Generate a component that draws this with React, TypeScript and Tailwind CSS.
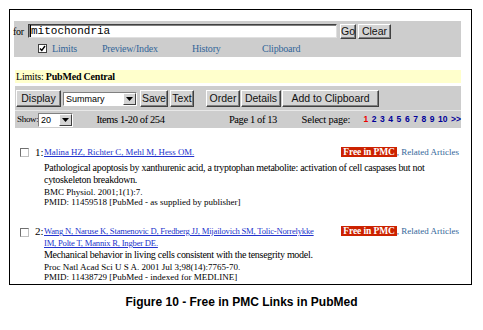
import React from "react";

const serif = { fontFamily: '"Liberation Serif", "Times New Roman", serif' };
const sans = { fontFamily: '"Liberation Sans", Arial, sans-serif' };
const mono = { fontFamily: '"Liberation Mono", "Courier New", monospace' };

function Btn({ w, children, h = "h-[17px]" }: { w: string; children: React.ReactNode; h?: string }) {
  return (
    <div
      className={`${w} ${h} flex items-center justify-center bg-[#d4d4d4] border-t border-l border-t-white border-l-white border-r border-b border-r-[#404040] border-b-[#404040] shadow-[inset_-1px_-1px_0_#808080] text-[10.5px] text-[#111] leading-none whitespace-nowrap`}
      style={sans}
    >
      {children}
    </div>
  );
}

function Select({ w, value }: { w: string; value: string }) {
  return (
    <div className={`${w} h-[14px] flex items-stretch bg-white border border-t-[#808080] border-l-[#808080] border-r-white border-b-white`}>
      <div className="flex-1 text-[9px] leading-[12px] pl-[2px] text-black" style={sans}>{value}</div>
      <div className="w-[13px] bg-[#d4d4d4] border-t border-l border-t-white border-l-white border-r border-b border-r-[#404040] border-b-[#404040] flex items-center justify-center">
        <svg width="7" height="4" viewBox="0 0 7 4"><path d="M0 0h7L3.5 4z" fill="#000" /></svg>
      </div>
    </div>
  );
}

function Check({ cls = "" }: { cls?: string }) {
  return <div className={`w-[9px] h-[9px] shrink-0 bg-white border border-t-[#707070] border-l-[#707070] border-r-[#c0c0c0] border-b-[#c0c0c0] ${cls}`} />;
}

function Badge() {
  return (
    <span className="flex items-center whitespace-nowrap text-[9px] leading-[10px]" style={serif}>
      <span className="bg-[#cc2200] text-white font-bold px-[2px] h-[10px] text-[9.5px] leading-[10px] tracking-[-0.1px]">Free in PMC</span>
      <span className="text-[#336699]">, Related Articles</span>
    </span>
  );
}

export default function App() {
  return (
    <div className="w-[483px] h-[330px] bg-white overflow-hidden pt-[9px]">
      <div className="ml-[9px] w-[463px] h-[276px] border border-black">
        {/* search band */}
        <div className="ml-[4px] mt-[11px] w-[447px] h-[36px] bg-[#cdcdcd]">
          <div className="flex items-center h-[18px] pt-[2px]">
            <span className="text-[10px] text-black -ml-[1px] w-[15px] tracking-[-0.3px]" style={serif}>for</span>
            <div className="w-[309px] h-[14px] bg-white border border-t-[#404040] border-l-[#404040] border-r-[#e0e0e0] border-b-[#e0e0e0] shadow-[inset_1px_1px_0_#808080] text-[11px] leading-[12px] pl-[1px] text-black" style={mono}>
              <span className="border-l border-black">mitochondria</span>
            </div>
            <div className="ml-[3px]"><Btn w="w-[16px]" h="h-[15px]">Go</Btn></div>
            <div className="ml-[2px]"><Btn w="w-[33px]" h="h-[15px]">Clear</Btn></div>
          </div>
          <div className="flex items-center h-[18px] text-[10px] tracking-[-0.2px] text-[#336699] whitespace-nowrap" style={serif}>
            <div className="ml-[24px] w-[10px] h-[9px] flex items-center">
              <div className="w-[9px] h-[9px] bg-white border border-[#404040] flex items-center justify-center">
                <svg width="7" height="7" viewBox="0 0 7 7"><path d="M1 3.5l1.8 2L6 1" stroke="#000" strokeWidth="1.4" fill="none" /></svg>
              </div>
            </div>
            <span className="ml-[4px] w-[50px]">Limits</span>
            <span className="w-[90px]">Preview/Index</span>
            <span className="w-[70px]">History</span>
            <span>Clipboard</span>
          </div>
        </div>

        {/* limits yellow */}
        <div className="ml-[5px] mt-[13px] w-[446px] h-[13px] bg-[#ffffcc] flex items-center text-[10px] tracking-[-0.2px] text-black pl-[1px]" style={serif}>
          Limits:&nbsp;<b>PubMed Central</b>
        </div>

        {/* toolbar */}
        <div className="ml-[5px] mt-[3px] w-[446px] bg-[#cdcdcd]">
          <div className="flex items-center h-[24px] pt-[1px] pl-[1px]">
            <Btn w="w-[45px]">Display</Btn>
            <div className="ml-[2px]"><Select w="w-[74px]" value="Summary" /></div>
            <div className="ml-[3px]"><Btn w="w-[28px]">Save</Btn></div>
            <div className="ml-[2px]"><Btn w="w-[24px]">Text</Btn></div>
            <div className="ml-[12px]"><Btn w="w-[34px]">Order</Btn></div>
            <div className="ml-[1px]"><Btn w="w-[40px]">Details</Btn></div>
            <div className="ml-[1px]"><Btn w="w-[97px]">Add to Clipboard</Btn></div>
          </div>
          <div className="h-px bg-[#e8e8e8]" />
          <div className="flex items-center h-[17px] text-black whitespace-nowrap" style={serif}>
            <span className="ml-[2px] w-[21px] text-[9px] tracking-[-0.3px]">Show:</span>
            <Select w="w-[36px]" value="20" />
            <span className="ml-[23px] w-[135px] text-[10.5px] tracking-[-0.4px]">Items 1-20 of 254</span>
            <span className="w-[74px] text-[10.5px] tracking-[-0.4px]">Page 1 of 13</span>
            <span className="w-[63px] text-[10.5px] tracking-[-0.2px]">Select page:</span>
            <span className="text-[8.5px] font-bold [word-spacing:1.2px]" style={sans}>
              <span className="text-[#ee0000]">1</span>{" "}
              <span className="text-[#000099]">2 3 4 5 6 7 8 9 10 &gt;&gt;</span>
            </span>
          </div>
        </div>

        {/* results */}
        <div className="ml-[10px] mt-[18px] w-[441px]">
          <div className="flex">
            <Check cls="mt-[2px]" />
            <span className="ml-[6px] w-[9px] text-[11px] leading-[12px] text-black" style={serif}>1:</span>
            <div className="flex-1">
              <div className="flex justify-between items-start">
                <span className="text-[8.8px] leading-[12px] text-[#2233cc] underline whitespace-nowrap" style={serif}>Malina HZ, Richter C, Mehl M, Hess OM.</span>
                <span className="mr-[2px] mt-[1px]"><Badge /></span>
              </div>
              <div className="mt-[4px] text-[10px] leading-[12px] tracking-[-0.3px] text-black pr-[2px]" style={serif}>
                Pathological apoptosis by xanthurenic acid, a tryptophan metabolite: activation of cell caspases but not cytoskeleton breakdown.
              </div>
              <div className="text-[9px] leading-[10px] text-black mt-[1px]" style={serif}>BMC Physiol. 2001;1(1):7.</div>
              <div className="text-[9px] leading-[10px] text-black" style={serif}>PMID: 11459518 [PubMed - as supplied by publisher]</div>
            </div>
          </div>

          <div className="flex mt-[18px]">
            <Check cls="mt-[3px]" />
            <span className="ml-[6px] w-[9px] text-[11px] leading-[12px] text-black" style={serif}>2:</span>
            <div className="flex-1">
              <div className="flex justify-between items-start">
                <span className="text-[8.6px] leading-[12px] text-[#2233cc] underline whitespace-nowrap tracking-[-0.2px]" style={serif}>
                  Wang N, Naruse K, Stamenovic D, Fredberg JJ, Mijailovich SM, Tolic-Norrelykke
                  <br />
                  IM, Polte T, Mannix R, Ingber DE.
                </span>
                <span className="mr-[2px] mt-[1px]"><Badge /></span>
              </div>
              <div className="text-[10px] leading-[12px] tracking-[-0.3px] text-black" style={serif}>
                Mechanical behavior in living cells consistent with the tensegrity model.
              </div>
              <div className="text-[9px] leading-[10px] text-black mt-[1px]" style={serif}>Proc Natl Acad Sci U S A. 2001 Jul 3;98(14):7765-70.</div>
              <div className="text-[9px] leading-[10px] text-black" style={serif}>PMID: 11438729 [PubMed - indexed for MEDLINE]</div>
            </div>
          </div>
        </div>
      </div>
      <div className="mt-[8px] text-center text-[12px] font-bold text-black" style={sans}>
        Figure 10 - Free in PMC Links in PubMed
      </div>
    </div>
  );
}
